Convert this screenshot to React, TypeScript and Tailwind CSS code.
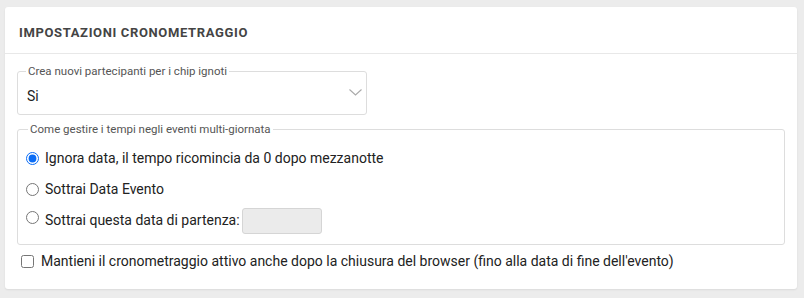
import { useState } from 'react'

const FONT = { fontFamily: 'Roboto, "Liberation Sans", sans-serif' }

const MULTI_DAY = [
  { id: 'ignore', label: 'Ignora data, il tempo ricomincia da 0 dopo mezzanotte' },
  { id: 'event', label: 'Sottrai Data Evento' },
  { id: 'custom', label: 'Sottrai questa data di partenza:' },
]

export default function App() {
  const [mode, setMode] = useState('ignore')
  const [keepAlive, setKeepAlive] = useState(false)

  return (
    <div className="w-[804px] h-[298px] bg-[#ececec] pt-[7px] pl-[5px] pr-[7px]" style={FONT}>
      <div className="bg-white rounded-[3px] shadow-[0_1px_2px_rgba(0,0,0,0.08)] h-[282px]">
        {/* Header */}
        <div className="h-[47px] border-b border-[#e8e8e8] pl-[14px] pt-[19px]">
          <h2 className="text-[13px] leading-[14px] font-bold tracking-[0.64px] text-[#444] uppercase">Impostazioni cronometraggio</h2>
        </div>

        <div className="px-3 pt-[10px]">
          {/* Unknown chips select */}
          <fieldset className="w-[350px] border border-[#ddd] rounded-[3px] h-[51px] pl-[9px] pr-[4px]">
            <legend className="text-[11.5px] text-[#555] px-[2px] -ml-[1px] leading-[14px]">Crea nuovi partecipanti per i chip ignoti</legend>
            <div className="flex items-center justify-between h-[24px] mt-[6px]">
              <span className="text-[14px] text-[#222]">Si</span>
              <svg width="13" height="7" viewBox="0 0 13 7" className="mt-[-7px]">
                <path d="M0.5 0.5l6 5.5l6-5.5" fill="none" stroke="#aaa" strokeWidth="1.1" />
              </svg>
            </div>
          </fieldset>

          {/* Multi-day events */}
          <fieldset className="mt-[7px] border border-[#ddd] rounded-[3px] h-[123px] pl-[8px] pr-3">
            <legend className="text-[11.5px] text-[#555] px-[2px] ml-[2px] leading-[14px]">Come gestire i tempi negli eventi multi-giornata</legend>
            <div className="flex flex-col mt-[7px]">
              {MULTI_DAY.map(opt => (
                <label key={opt.id} className="flex items-center h-[31px] text-[14px] text-[#222] cursor-pointer">
                  <input
                    type="radio"
                    name="multiday"
                    checked={mode === opt.id}
                    onChange={() => setMode(opt.id)}
                    className={`w-[13px] h-[13px] m-0 mr-[6px] accent-[#0a6cf5] ${opt.id === 'custom' ? 'mb-[6px]' : ''}`}
                  />
                  <span>{opt.label}</span>
                  {opt.id === 'custom' && (
                    <span className="ml-[2px] w-[80px] h-[26px] bg-[#ebebeb] border border-[#d5d5d5] rounded-[3px]" />
                  )}
                </label>
              ))}
            </div>
          </fieldset>

          {/* Keep timing alive */}
          <label className="flex items-center mt-[6px] ml-[4px] text-[14px] leading-[21px] text-[#222] cursor-pointer">
            <input
              type="checkbox"
              checked={keepAlive}
              onChange={e => setKeepAlive(e.target.checked)}
              className="w-[13px] h-[13px] m-0 mr-[7px]"
            />
            Mantieni il cronometraggio attivo anche dopo la chiusura del browser (fino alla data di fine dell'evento)
          </label>
        </div>
      </div>
    </div>
  )
}
